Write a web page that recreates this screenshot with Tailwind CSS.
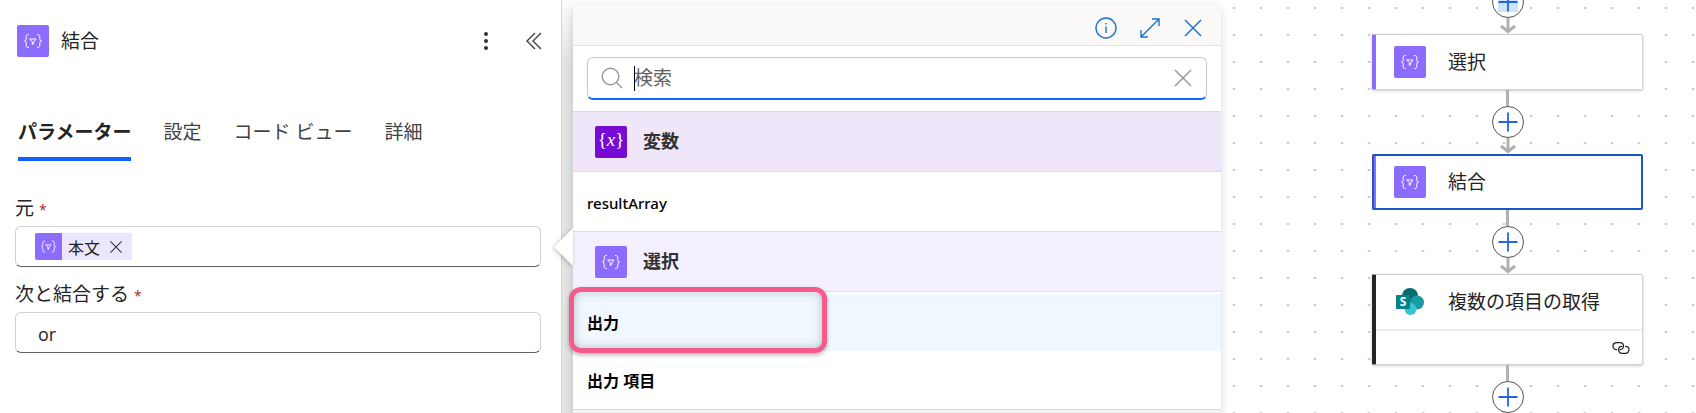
<!DOCTYPE html>
<html lang="ja">
<head>
  <meta charset="UTF-8" />
  <meta name="viewport" content="width=device-width, initial-scale=1.0"/>
  <title>結合 - フロー デザイナー</title>
  <script src="https://cdn.jsdelivr.net/npm/@tailwindcss/browser@4"></script>
</head>
<body class="bg-white text-[#242424] font-['Open_Sans','Noto_Sans_CJK_JP',sans-serif]">
  <!-- Icons -->
  <svg class="hidden">
    <symbol id="data-op" viewBox="0 0 32 32">
      <g fill="none" stroke="#fff" stroke-width="1" stroke-linecap="round" stroke-linejoin="round">
        <path d="M11.500 9.500c-2 0-2.300.8-2.300 2.300v2c0 1.400-.5 2.200-1.700 2.200 1.200 0 1.700.8 1.700 2.200v2c0 1.500.3 2.300 2.300 2.300" />
        <path d="M20.500 9.500c2 0 2.300.8 2.300 2.300v2c0 1.400.5 2.200 1.700 2.200-1.200 0-1.700.8-1.700 2.200v2c0 1.500-.3 2.300-2.300 2.300" />
        <path d="M13 14h6l-2.300 3v1.500l-1.400 1V17z" />
      </g>
    </symbol>
    <symbol id="cross" viewBox="0 0 20 20">
      <path d="M2 2l16 16M18 2L2 18" fill="none" stroke="currentColor" stroke-width="1.500" />
    </symbol>
    <symbol id="plus" viewBox="0 0 20 20">
      <path d="M10 .5v19M.5 10h19" fill="none" stroke="#2266e3" stroke-width="1.800" />
    </symbol>
    <symbol id="arrow" viewBox="0 0 18 16">
      <path d="M9 0v14M2 8l7 5.500L16 8" fill="none" stroke="#b1b1b4" stroke-width="3" />
    </symbol>
  </svg>

  <div class="flex h-screen overflow-hidden">
    <!-- Action settings -->
    <section class="w-[562px] shrink-0 border-r border-[#d6d6d6] bg-white pl-[15px] pr-5">
      <header class="-mr-[3px] flex items-center pt-[25px] pl-0.5">
        <svg class="size-8 rounded-xs bg-[#8c6cff]"><use href="#data-op" /></svg>
        <h1 class="ml-3 text-[19px] leading-8">結合</h1>
        <button class="ml-auto" aria-label="その他">
          <svg class="size-5" viewBox="0 0 20 20" fill="#333"><circle cx="10" cy="3" r="2" /><circle cx="10" cy="10" r="2" /><circle cx="10" cy="17" r="2" /></svg>
        </button>
        <button class="ml-7" aria-label="折りたたむ">
          <svg class="size-5" viewBox="0 0 20 20" fill="none" stroke="#424242" stroke-width="1.400"><path d="M11 2L3 10l8 8M17 2l-8 8 8 8" /></svg>
        </button>
      </header>

      <nav class="mt-[61px] ml-[3px] flex gap-8 text-[19px] leading-7 text-[#424242]">
        <button class="border-b-4 border-[#0f62fe] pb-[11px] font-bold text-[#242424]">パラメーター</button>
        <button class="border-b-4 border-transparent pb-[11px]">設定</button>
        <button class="border-b-4 border-transparent pb-[11px]">コード ビュー</button>
        <button class="border-b-4 border-transparent pb-[11px]">詳細</button>
      </nav>

      <div class="mt-[31px]">
        <label for="from" class="block pb-0.5 text-[19px] leading-8">元 <span class="text-sm text-[#a4262c]">*</span></label>
        <div class="flex h-[41px] items-center rounded-md border border-[#d1d1d1] border-b-[#616161] px-[19px]">
          <span class="flex h-[27px] items-center rounded-xs bg-[#ece6ff] text-base">
            <svg class="size-[27px] rounded-l-xs bg-[#8c6cff]"><use href="#data-op" /></svg>
            <span class="ml-1.5 pt-0.5">本文</span>
            <button class="mx-[9px]" aria-label="本文を削除"><svg class="size-[14px] text-[#333]"><use href="#cross" /></svg></button>
          </span>
          <input id="from" class="min-w-0 flex-1 outline-none" />
        </div>
      </div>

      <div class="mt-[11px]">
        <label for="join" class="block pb-0.5 text-[19px] leading-8">次と結合する <span class="text-sm text-[#a4262c]">*</span></label>
        <input id="join" value="or" class="h-[41px] w-full rounded-md border border-[#d1d1d1] border-b-[#616161] px-[22px] pt-0.5 text-[18px] outline-none" />
      </div>
    </section>

    <!-- Dynamic content picker -->
    <div class="flex w-[659px] shrink-0 bg-linear-to-b from-[#fcfcfc] to-[#e2e3e3] to-15% pl-[11px]">
      <section class="relative mt-[5px] flex-1 bg-white shadow-[0_4px_8px_rgba(0,0,0,0.16)]">
        <svg class="absolute top-[222px] -left-5 h-10 w-5 drop-shadow-[-1px_1px_2px_rgba(0,0,0,0.25)]" viewBox="0 0 20 40"><path d="M20 1L1 20l19 19z" fill="#fff" /></svg>

        <header class="flex h-[41px] items-center justify-end gap-[22px] border-b border-[#e5e4e3] bg-[#faf9f8] pt-1.5 pr-[18px] text-[#1a73d1]">
          <button aria-label="情報">
            <svg class="size-[22px]" viewBox="0 0 22 22" fill="none" stroke="currentColor" stroke-width="1.400"><circle cx="11" cy="11" r="10" /><path d="M11 9.500V16M11 6v1.500" /></svg>
          </button>
          <button aria-label="拡大">
            <svg class="size-[22px]" viewBox="0 0 22 22" fill="none" stroke="currentColor" stroke-width="1.400"><path d="M2 20L20 2M13 2h7v7M2 13v7h7" /></svg>
          </button>
          <button aria-label="閉じる"><svg class="size-5"><use href="#cross" /></svg></button>
        </header>

        <div class="px-3.5 pt-[11px] pb-[11px]">
          <div class="flex h-[43px] items-center rounded-md border border-[#c8c8c8] border-b-2 border-b-[#0f6cfe] px-[13px]">
            <svg class="size-[22px]" viewBox="0 0 22 22" fill="none" stroke="#999" stroke-width="1.400"><circle cx="9.500" cy="9.500" r="8.300" /><path d="M15.500 15.500l5.500 5.500" /></svg>
            <span class="ml-[11px] -mr-px h-[25px] w-px bg-black"></span>
            <input type="search" aria-label="検索" placeholder="検索" class="min-w-0 flex-1 text-[19px] outline-none placeholder:text-[#616161]" />
            <button aria-label="クリア"><svg class="size-5 text-[#999]"><use href="#cross" /></svg></button>
          </div>
        </div>

        <h2 class="flex h-[61px] items-center border-y border-[#dfd8ea] bg-[#f0e6fa] pl-[22px] text-[18px] font-bold text-[#323130]">
          <span class="mr-4 flex size-8 items-center justify-center rounded-xs bg-[#770bd6] pb-1 font-['Liberation_Serif',serif] text-[19px] leading-none font-normal text-white">{<i>x</i>}</span>変数
        </h2>
        <button class="block h-[59px] w-full px-3.5 pt-1 text-left font-['Noto_Sans',sans-serif] text-[15px] font-medium text-black">resultArray</button>
        <h2 class="flex h-[61px] items-center border-y border-[#e2dcf0] bg-[#f4f0ff] pl-[22px] text-[18px] font-bold text-[#323130]">
          <svg class="mr-4 size-8 rounded-xs bg-[#8c6cff]"><use href="#data-op" /></svg>選択
        </h2>
        <div class="relative pt-0.5">
          <button class="block h-[57px] w-full bg-[#f0f7fe] px-3.5 text-left text-base font-bold text-black">出力</button>
          <span class="pointer-events-none absolute -top-[5px] -left-1 h-[66px] w-[258px] rounded-xl border-5 border-[#f55a8c] shadow-[0_2px_4px_rgba(0,0,0,0.3),inset_0_0_10px_rgba(60,90,110,0.35)]"></span>
        </div>
        <button class="block h-[58px] w-full px-3.5 pt-0.5 text-left text-base font-bold text-black">出力 項目</button>
        <div class="h-6 border-t border-[#dcdcdc] bg-[#f3f3f3]"></div>
      </section>
    </div>

    <!-- Flow canvas -->
    <main class="flex min-w-0 flex-1 flex-col bg-[radial-gradient(ellipse_2px_1px_at_13px_8px,#c4c4c4_50%,transparent)] bg-size-[27px_27px] pl-[151px]">
      <div class="-mt-[30px] flex w-[271px] shrink-0 flex-col items-center">
        <span class="h-4 w-[3px] bg-[#b1b1b4]"></span>
        <button aria-label="アクションの追加" class="flex size-8 items-center justify-center rounded-full border border-[#555] bg-white"><svg class="size-5 bg-[#cfe4fa]"><use href="#plus" /></svg></button>
        <svg class="h-4 w-[18px]"><use href="#arrow" /></svg>

        <button class="flex h-14 w-full items-center rounded-xs border border-l-4 border-[#d0d0d0] border-l-[#8c6cff] bg-white pl-[18px] text-left text-[19px] shadow-[0_1px_3px_rgba(0,0,0,0.2)]">
          <svg class="mr-[22px] size-8 rounded-xs bg-[#8c6cff]"><use href="#data-op" /></svg>選択
        </button>

        <span class="h-4 w-[3px] bg-[#b1b1b4]"></span>
        <button aria-label="アクションの追加" class="flex size-8 items-center justify-center rounded-full border border-[#555] bg-white"><svg class="size-5"><use href="#plus" /></svg></button>
        <svg class="h-4 w-[18px]"><use href="#arrow" /></svg>

        <button class="flex h-14 w-full items-center rounded-xs border-l-4 border-[#8c6cff] bg-white pl-[18px] text-left text-[19px] outline-2 -outline-offset-2 outline-[#1b57c0]">
          <svg class="mr-[22px] size-8 rounded-xs bg-[#8c6cff]"><use href="#data-op" /></svg>結合
        </button>

        <span class="h-4 w-[3px] bg-[#b1b1b4]"></span>
        <button aria-label="アクションの追加" class="flex size-8 items-center justify-center rounded-full border border-[#555] bg-white"><svg class="size-5"><use href="#plus" /></svg></button>
        <svg class="h-4 w-[18px]"><use href="#arrow" /></svg>

        <button class="flex w-full flex-col rounded-xs border border-l-4 border-[#d0d0d0] border-l-[#242424] bg-white text-left text-[19px] shadow-[0_1px_3px_rgba(0,0,0,0.2)]">
          <span class="flex h-14 w-full items-center border-b-2 border-[#ececec] pl-[18px]">
            <svg class="mr-[22px] size-8" viewBox="0 0 32 32">
              <circle cx="16" cy="10" r="8" fill="#036c70" />
              <circle cx="23" cy="16.500" r="7" fill="#1a9ba1" />
              <circle cx="16.500" cy="23" r="6" fill="#37c6d0" />
              <rect x="2" y="9" width="14" height="14" rx="1" fill="#038387" />
              <text x="9" y="20" fill="#fff" text-anchor="middle" font-family="Open Sans" font-size="12" font-weight="700">S</text>
            </svg>複数の項目の取得
          </span>
          <span class="flex h-[33px] w-full items-center justify-end pr-3">
            <svg class="h-3 w-[18px]" viewBox="0 0 18 12" fill="none" stroke="#242424" stroke-width="1.200" stroke-linecap="round"><path d="M4.500 7.700a3.500 3.500 0 010-7H8a3.500 3.500 0 010 7" /><path d="M13.500 4.300a3.500 3.500 0 010 7H10a3.500 3.500 0 010-7" /></svg>
          </span>
        </button>

        <span class="h-4 w-[3px] bg-[#b1b1b4]"></span>
        <button aria-label="アクションの追加" class="flex size-8 items-center justify-center rounded-full border border-[#555] bg-white"><svg class="size-5"><use href="#plus" /></svg></button>
      </div>
    </main>
  </div>
</body>
</html>
